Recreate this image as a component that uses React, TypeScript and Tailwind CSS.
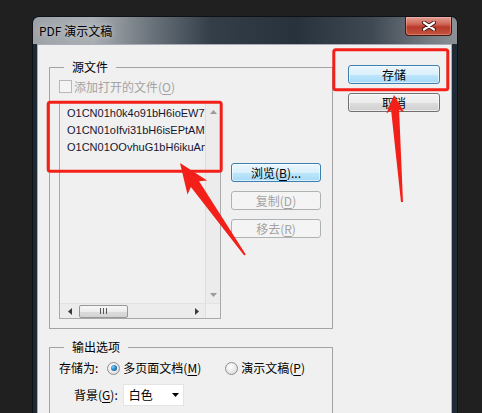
import React from "react";

const U = ({ c }: { c: string }) => (
  <span className="underline underline-offset-[2px] decoration-[1px]">{c}</span>
);

const Tri = ({ dir, color }: { dir: "up" | "down" | "left" | "right"; color: string }) => {
  const pts: Record<string, string> = {
    up: "0,4 7,4 3.5,0",
    down: "0,0 7,0 3.5,4",
    left: "4,0 4,7 0,3.5",
    right: "0,0 0,7 4,3.5",
  };
  const w = dir === "up" || dir === "down" ? 7 : 4;
  const h = dir === "up" || dir === "down" ? 4 : 7;
  return (
    <svg width={w} height={h} viewBox={`0 0 ${w} ${h}`} className="block">
      <polygon points={pts[dir]} fill={color} />
    </svg>
  );
};

const Radio = ({ checked }: { checked?: boolean }) => (
  <div className="w-[13px] h-[13px] rounded-full border border-[#8e8f8f] bg-[radial-gradient(circle_at_40%_35%,#ffffff_0%,#e6e6e6_60%,#cfcfcf_100%)] flex items-center justify-center shrink-0">
    {checked && (
      <div className="w-[6px] h-[6px] rounded-full bg-[radial-gradient(circle_at_35%_35%,#7fd0f5_0%,#1b7bbd_55%,#0d4f86_100%)]" />
    )}
  </div>
);

const blueBtn =
  "flex items-center justify-center rounded-[3px] border border-[#3c7fb1] bg-[linear-gradient(to_bottom,#eaf6fd_0%,#d9f0fc_50%,#bee6fd_51%,#a7d9f5_100%)] shadow-[inset_0_0_0_1px_rgba(255,255,255,0.55)] text-black";
const grayBtn =
  "flex items-center justify-center rounded-[3px] border border-[#707070] bg-[linear-gradient(to_bottom,#f2f2f2_0%,#ebebeb_50%,#dddddd_51%,#cfcfcf_100%)] shadow-[inset_0_0_0_1px_rgba(255,255,255,0.6)] text-black";
const disBtn =
  "flex items-center justify-center rounded-[3px] border border-[#adb2b5] bg-[#f4f4f4] text-[#a3a3a3]";

export default function App() {
  return (
    <div className="relative w-[482px] h-[413px] overflow-hidden bg-[#202020] font-['Noto_Sans_CJK_SC','Noto_Sans',sans-serif] text-[12px] leading-[16px] text-black">
      <div className="ml-[32px] mt-[16px] w-[426px] h-[410px] flex flex-col border border-[#0e1216] rounded-t-[7px] bg-[#1e2a36] overflow-hidden">
        {/* Title bar */}
        <div className="h-[27px] shrink-0 flex items-start justify-between bg-[linear-gradient(90deg,#9ca2a7_0%,#a9afb3_14%,#6a737b_28%,#333e49_42%,#27323d_62%,#3e4953_80%,#737a81_93%,#8b9197_100%)]">
          <div className="pl-[6px] pt-[6px] text-[12px] leading-[16px] text-black [text-shadow:0_0_6px_rgba(255,255,255,0.6)]">
            PDF 演示文稿
          </div>
          <div className="mr-[5px] w-[47px] h-[19px] rounded-b-[4px] border border-t-0 border-[#4a1712] bg-[linear-gradient(to_bottom,#e3a196_0%,#d06455_40%,#b83a2b_55%,#c4543f_100%)] shadow-[inset_0_0_0_1px_rgba(255,200,190,0.35)] flex items-center justify-center">
            <svg width="14" height="10" viewBox="0 0 14 10">
              <path d="M2 1.5 L12 8.5 M12 1.5 L2 8.5" stroke="#3a1410" strokeWidth="4" strokeLinecap="round" />
              <path d="M2 1.5 L12 8.5 M12 1.5 L2 8.5" stroke="#ffffff" strokeWidth="2.2" strokeLinecap="round" />
            </svg>
          </div>
        </div>
        {/* Body frame */}
        <div className="flex-1 pl-[4px] pr-[5px] flex">
          <div className="flex-1 bg-[#f0f0f0] border border-b-0 border-[#a7aeb5] flex items-start">
            {/* Left column */}
            <div className="pl-[11px] pt-[14px] flex flex-col">
              <fieldset className="w-[284px] border border-[#a3a3a3] px-[9px] pt-[5px] pb-[9px]">
                <legend className="ml-[5px] px-[8px] leading-[16px]">源文件</legend>
                <div className="flex items-center h-[13px] gap-[2px] text-[#a3a3a3]">
                  <div className="w-[13px] h-[13px] border border-[#b8b8b8] bg-[#f4f4f4]" />
                  <span>
                    添加打开的文件(<U c="O" />)
                  </span>
                </div>
                <div className="mt-[9px] flex items-start">
                  {/* List box */}
                  <div className="w-[162px] h-[217px] border border-[#a9a9a9] bg-[#f0f0f0] flex flex-col">
                    <div className="flex-1 flex min-h-0">
                      <div className="flex-1 overflow-hidden pl-[7px] pt-[2px] font-['Liberation_Sans',Arial,sans-serif] text-[11px] leading-[17px] text-[#161630] whitespace-nowrap">
                        <div>O1CN01h0k4o91bH6ioEW7</div>
                        <div>O1CN01oIfvi31bH6isEPtAM</div>
                        <div>O1CN01OOvhuG1bH6ikuAn</div>
                      </div>
                      <div className="w-[15px] border-l border-[#dedede] bg-[#ececec] flex flex-col items-center justify-between pt-[7px] pb-[6px]">
                        <Tri dir="up" color="#9a9a9a" />
                        <Tri dir="down" color="#9a9a9a" />
                      </div>
                    </div>
                    <div className="h-[15px] flex border-t border-[#e2e2e2]">
                      <div className="flex-1 flex items-center bg-[#ececec]">
                        <div className="w-[19px] flex justify-center">
                          <Tri dir="left" color="#3a3a3a" />
                        </div>
                        <div className="w-[49px] h-[13px] rounded-[2px] border border-[#979797] bg-[linear-gradient(to_bottom,#f7f7f7_0%,#ececec_50%,#dcdcdc_51%,#d3d3d3_100%)] flex items-center justify-center gap-[2px]">
                          <div className="w-[1px] h-[6px] bg-[#555]" />
                          <div className="w-[1px] h-[6px] bg-[#555]" />
                          <div className="w-[1px] h-[6px] bg-[#555]" />
                        </div>
                        <div className="flex-1" />
                        <div className="w-[17px] flex justify-center">
                          <Tri dir="right" color="#3a3a3a" />
                        </div>
                      </div>
                      <div className="w-[15px] border-l border-[#dedede] bg-[#f0f0f0]" />
                    </div>
                  </div>
                  {/* Side buttons */}
                  <div className="ml-[10px] pt-[61px] w-[90px] flex flex-col gap-[9px]">
                    <div className={`h-[19px] ${blueBtn}`}>
                      <span>
                        浏览(<U c="B" />)...
                      </span>
                    </div>
                    <div className={`h-[19px] ${disBtn}`}>
                      <span>
                        复制(<U c="D" />)
                      </span>
                    </div>
                    <div className={`h-[19px] ${disBtn}`}>
                      <span>
                        移去(<U c="R" />)
                      </span>
                    </div>
                  </div>
                </div>
              </fieldset>
              <fieldset className="mt-[10px] w-[284px] border border-[#a3a3a3] px-[9px] pt-[5px] pb-[20px]">
                <legend className="ml-[5px] px-[8px] leading-[16px]">输出选项</legend>
                <div className="flex items-center h-[16px]">
                  <span>存储为:</span>
                  <div className="ml-[9px]">
                    <Radio checked />
                  </div>
                  <span className="ml-[3px]">
                    多页面文档(<U c="M" />)
                  </span>
                  <div className="ml-[24px]">
                    <Radio />
                  </div>
                  <span className="ml-[3px]">
                    演示文稿(<U c="P" />)
                  </span>
                </div>
                <div className="mt-[8px] flex items-center pl-[15px]">
                  <span>
                    背景(<U c="G" />):
                  </span>
                  <div className="ml-[5px] w-[61px] h-[22px] bg-white border border-[#e4e4e4] flex items-center justify-between pl-[5px] pr-[4px]">
                    <span>白色</span>
                    <Tri dir="down" color="#000000" />
                  </div>
                </div>
              </fieldset>
            </div>
            {/* Right column */}
            <div className="ml-[15px] pt-[20px] w-[92px] flex flex-col gap-[9px]">
              <div className={`h-[19px] ${blueBtn}`}>存储</div>
              <div className={`h-[19px] ${grayBtn}`}>取消</div>
            </div>
          </div>
        </div>
      </div>

      {/* Annotation overlay */}
      <svg
        className="absolute left-0 top-0 pointer-events-none"
        width="482"
        height="413"
        viewBox="0 0 482 413"
      >
        <rect x="48.2" y="102.2" width="173" height="69" rx="2" fill="none" stroke="#f3201a" strokeWidth="3" />
        <rect x="333.8" y="49.8" width="114" height="40" rx="2" fill="none" stroke="#f3201a" strokeWidth="3" />
        <polygon
          points="180,163 207.1,180.6 199.1,181.3 245.8,254.4 244.2,255.6 190.9,187.1 187.5,194.4"
          fill="#f3201a"
        />
        <polygon
          points="394,95 404.3,112.2 399.1,109.7 403,201.9 401,202.1 391.1,110.3 386.3,113.6"
          fill="#f3201a"
        />
      </svg>
    </div>
  );
}
